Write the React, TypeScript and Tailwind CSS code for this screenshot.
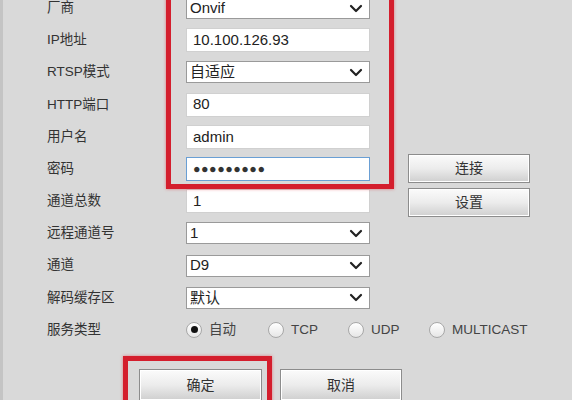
import React from 'react';

const font = { fontFamily: '"Liberation Sans", "Noto Sans CJK SC", sans-serif' };

const Chevron = () => (
  <svg width="14" height="9" viewBox="0 0 14 9" className="shrink-0">
    <path d="M2 2 L7 7 L12 2" fill="none" stroke="#222" strokeWidth="2.2" strokeLinecap="round" strokeLinejoin="round" />
  </svg>
);

type Field =
  | { label: string; kind: 'select'; value: string }
  | { label: string; kind: 'text'; value: string; focus?: boolean; password?: boolean };

const fields: Field[] = [
  { label: '厂商', kind: 'select', value: 'Onvif' },
  { label: 'IP地址', kind: 'text', value: '10.100.126.93' },
  { label: 'RTSP模式', kind: 'select', value: '自适应' },
  { label: 'HTTP端口', kind: 'text', value: '80' },
  { label: '用户名', kind: 'text', value: 'admin' },
  { label: '密码', kind: 'text', value: '●●●●●●●●●', focus: true, password: true },
  { label: '通道总数', kind: 'text', value: '1' },
  { label: '远程通道号', kind: 'select', value: '1' },
  { label: '通道', kind: 'select', value: 'D9' },
  { label: '解码缓存区', kind: 'select', value: '默认' },
];

const Button = ({ children, className = '' }: { children: React.ReactNode; className?: string }) => (
  <div
    className={
      'flex items-center justify-center border border-[#8c8c8c] bg-gradient-to-b from-[#fbfbfb] via-[#ececec] to-[#cfcfcf] text-[14px] text-[#333] shadow-[inset_0_0_0_1px_#fff] ' +
      className
    }
  >
    {children}
  </div>
);

const Radio = ({ checked, label }: { checked?: boolean; label: string }) => (
  <div className="flex items-center gap-[7px]">
    <div className="flex h-[16px] w-[16px] items-center justify-center rounded-full border border-[#a8a8a8] bg-gradient-to-b from-[#ffffff] to-[#e6e6e6]">
      {checked && <div className="h-[7px] w-[7px] rounded-full bg-[#111]" />}
    </div>
    <span className="text-[13.5px] text-[#444]">{label}</span>
  </div>
);

export default function App() {
  return (
    <div className="relative h-[400px] w-[572px] overflow-hidden bg-[#d9d9d9]" style={font}>
      <div className="absolute left-0 top-0 h-full w-[3px] bg-[#c4c4c4]" />

      <div className="mt-[-8px] flex">
        <div className="flex w-[408px] shrink-0 flex-col pl-[47px]">
          {fields.map((f) => (
            <div key={f.label} className="flex h-[32.2px] items-center">
              <span className="w-[139px] text-[13.5px] text-[#333]">{f.label}</span>
              {f.kind === 'select' ? (
                <div className="flex h-[22px] w-[184px] items-center justify-between border border-[#9a9a9a] bg-white pl-[3px] pr-[6px] text-[15px] text-[#222]">
                  <span>{f.value}</span>
                  <Chevron />
                </div>
              ) : (
                <div
                  className={
                    'flex h-[24px] w-[184px] items-center border bg-white px-[6px] text-[#222] ' +
                    (f.focus ? 'border-[#6a9fd4] ' : 'border-[#d0d0d0] ') +
                    (f.password ? 'text-[12.5px] tracking-[0.5px] text-[#333]' : 'text-[15px]')
                  }
                >
                  {f.value}
                </div>
              )}
            </div>
          ))}
          <div className="flex h-[32.2px] items-center whitespace-nowrap">
            <span className="w-[139px] shrink-0 text-[13.5px] text-[#333]">服务类型</span>
            <div className="flex items-center">
              <div className="w-[82px] shrink-0">
                <Radio checked label="自动" />
              </div>
              <div className="w-[80px] shrink-0">
                <Radio label="TCP" />
              </div>
              <div className="w-[81px] shrink-0">
                <Radio label="UDP" />
              </div>
              <Radio label="MULTICAST" />
            </div>
          </div>
        </div>

        <div className="flex flex-col gap-[5px] pt-[162px]">
          <Button className="h-[29px] w-[122px]">连接</Button>
          <Button className="h-[29px] w-[122px]">设置</Button>
        </div>
      </div>

      <div className="ml-[139px] mt-[23px] flex gap-[18px]">
        <Button className="h-[32px] w-[123px]">确定</Button>
        <Button className="h-[32px] w-[122px]">取消</Button>
      </div>

      <div className="pointer-events-none absolute left-[166px] top-[-10px] h-[199px] w-[228px] border-[5px] border-[#d41e2d] shadow-[0_0_3px_rgba(230,60,70,0.6)]" />
      <div className="pointer-events-none absolute left-[123px] top-[356px] h-[60px] w-[149px] border-[5px] border-[#d41e2d] shadow-[0_0_3px_rgba(230,60,70,0.6)]" />
    </div>
  );
}
